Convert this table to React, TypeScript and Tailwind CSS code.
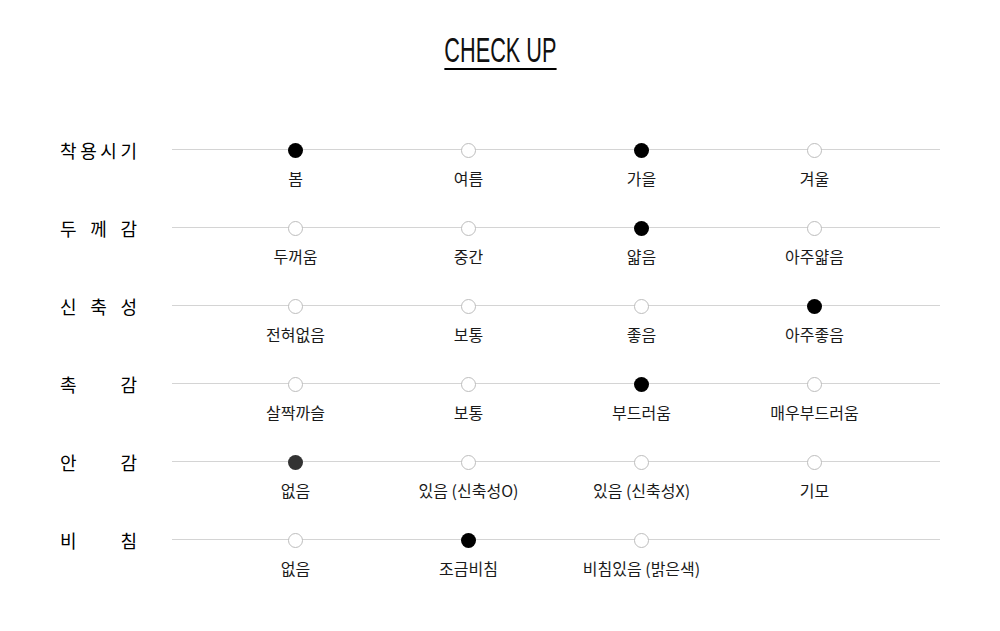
const rows: { label: string[]; options: string[]; picks: number[]; dark?: boolean }[] = [
  { label: ['착', '용', '시', '기'], options: ['봄', '여름', '가을', '겨울'], picks: [0, 2] },
  { label: ['두', '께', '감'], options: ['두꺼움', '중간', '얇음', '아주얇음'], picks: [2] },
  { label: ['신', '축', '성'], options: ['전혀없음', '보통', '좋음', '아주좋음'], picks: [3] },
  { label: ['촉', '감'], options: ['살짝까슬', '보통', '부드러움', '매우부드러움'], picks: [2] },
  { label: ['안', '감'], options: ['없음', '있음 (신축성O)', '있음 (신축성X)', '기모'], picks: [0], dark: true },
  { label: ['비', '침'], options: ['없음', '조금비침', '비침있음 (밝은색)'], picks: [1] },
];

const Dot = ({ on, dark }: { on: boolean; dark?: boolean }) => {
  if (on) {
    return <span className={`block w-[15px] h-[15px] rounded-full ${dark ? 'bg-[#333333]' : 'bg-black'}`}></span>;
  }
  return <span className="block w-[15px] h-[15px] rounded-full bg-white border border-[#bdbdbd]"></span>;
};

export default function App() {
  return (
    <div className="w-[1000px] h-[631px] bg-white text-[#111]" style={{ fontFamily: '"Noto Sans CJK KR", "Noto Sans", sans-serif' }}>
      {/* Title */}
      <div className="flex justify-center pt-[33px]">
        <h1
          className="inline-block text-[35px] leading-[34px] border-b-2 border-black pb-[1px] text-[#111] scale-x-[0.62]"
          style={{ fontFamily: '"Liberation Sans", Arial, sans-serif' }}
        >
          CHECK UP
        </h1>
      </div>

      {/* Rows */}
      <div className="flex flex-col mt-[67px] pl-[60px]">
        {rows.map((row, i) => (
          <div key={i} className="flex h-[78px]">
            <div className="w-[77px] h-[26px] flex justify-between items-center text-[18px] text-black">
              {row.label.map((c, j) => (
                <span key={j}>{c}</span>
              ))}
            </div>
            <div className="relative ml-[35px] w-[768px]">
              <div className="absolute left-0 right-0 top-[12px] h-px bg-[#d4d4d4]"></div>
              <div className="relative flex pl-[37px]">
                {row.options.map((opt, k) => (
                  <div key={k} className="w-[173px] flex flex-col items-center">
                    <div className="h-[26px] flex items-center">
                      <Dot on={row.picks.includes(k)} dark={row.dark} />
                    </div>
                    <span className="mt-[5px] text-[16px] leading-[21px] text-[#1a1a1a] whitespace-nowrap">{opt}</span>
                  </div>
                ))}
              </div>
            </div>
          </div>
        ))}
      </div>
    </div>
  );
}
